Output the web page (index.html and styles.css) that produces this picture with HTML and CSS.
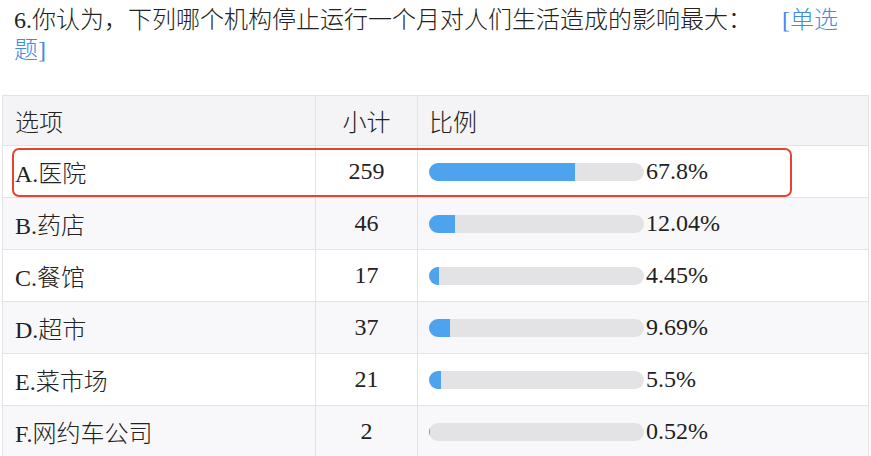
FILE: index.html
```html
<!DOCTYPE html>
<html lang="zh-CN">
<head>
<meta charset="utf-8">
<link rel="stylesheet" href="styles.css">
</head>
<body>
<div class="page">
  <p class="question">6.你认为，下列哪个机构停止运行一个月对人们生活造成的影响最大：<span class="qtype">[单选题]</span></p>
  <div class="table-wrap">
    <table class="result">
      <thead>
        <tr><th class="c-opt">选项</th><th class="c-num">小计</th><th class="c-pct">比例</th></tr>
      </thead>
      <tbody>
        <tr><td class="c-opt">A.医院</td><td class="c-num">259</td><td class="c-pct"><div class="pct"><div class="bar"><div class="fill" style="width:67.8%"></div></div><span>67.8%</span></div></td></tr>
        <tr><td class="c-opt">B.药店</td><td class="c-num">46</td><td class="c-pct"><div class="pct"><div class="bar"><div class="fill" style="width:12.04%"></div></div><span>12.04%</span></div></td></tr>
        <tr><td class="c-opt">C.餐馆</td><td class="c-num">17</td><td class="c-pct"><div class="pct"><div class="bar"><div class="fill" style="width:4.45%"></div></div><span>4.45%</span></div></td></tr>
        <tr><td class="c-opt">D.超市</td><td class="c-num">37</td><td class="c-pct"><div class="pct"><div class="bar"><div class="fill" style="width:9.69%"></div></div><span>9.69%</span></div></td></tr>
        <tr><td class="c-opt">E.菜市场</td><td class="c-num">21</td><td class="c-pct"><div class="pct"><div class="bar"><div class="fill" style="width:5.5%"></div></div><span>5.5%</span></div></td></tr>
        <tr><td class="c-opt">F.网约车公司</td><td class="c-num">2</td><td class="c-pct"><div class="pct"><div class="bar"><div class="fill" style="width:0.52%"></div></div><span>0.52%</span></div></td></tr>
      </tbody>
    </table>
    <div class="highlight"></div>
  </div>
</div>
</body>
</html>
```
FILE: styles.css
```css
html, body {
  margin: 0;
  padding: 0;
  background: #ffffff;
}
body {
  font-family: "Liberation Serif", "Noto Sans CJK SC", serif;
  color: #222222;
  font-size: 24px;
  font-weight: 300;
  overflow: hidden;
}
.page {
  padding: 5px 0 0 2px;
  width: 867px;
}
.question {
  margin: 0;
  padding: 0 13px 0 12px;
  line-height: 30px;
  color: #222222;
}
.qtype {
  color: #3e8ae6;
  margin-left: 30px;
}
.table-wrap {
  position: relative;
  margin-top: 30px;
}
.result {
  width: 867px;
  border-collapse: collapse;
  table-layout: fixed;
}
.result th,
.result td {
  border: 1px solid #e3e3e5;
  padding: 0;
  font-weight: 300;
  text-align: left;
  vertical-align: middle;
}
.result thead th {
  background: #f4f4f6;
  height: 49px;
}
.result tbody td {
  height: 51px;
}
.result tbody tr:nth-child(even) td {
  background: #f8f8fa;
}
.c-opt {
  width: 300px;
  padding-left: 12px !important;
}
.c-num {
  width: 101px;
  text-align: center !important;
}
.c-pct {
  padding-left: 11px !important;
}
.pct {
  display: flex;
  align-items: center;
}
.bar {
  width: 215px;
  height: 18px;
  border-radius: 9px;
  background: #e3e3e5;
  overflow: hidden;
  margin-right: 2px;
}
.fill {
  height: 100%;
  background: #4ea3ef;
}
.highlight {
  position: absolute;
  left: 10px;
  top: 53px;
  width: 776px;
  height: 45px;
  border: 2.5px solid #e8432f;
  border-radius: 7px;
}
```
